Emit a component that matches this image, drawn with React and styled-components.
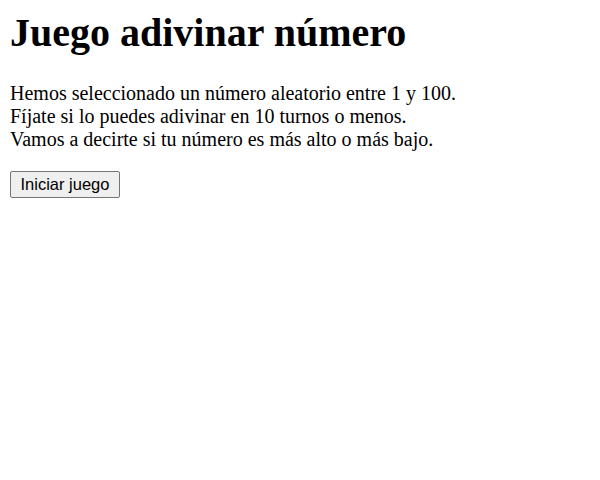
import React from "react";
import styled, { createGlobalStyle } from "styled-components";

const GlobalStyle = createGlobalStyle`
  html, body {
    background: #fff;
  }
  body {
    margin: 10px;
    font-family: "Liberation Serif", "Times New Roman", serif;
    font-size: 20px;
    color: #000;
  }
`;

const Title = styled.h1`
  font-size: 40px;
  font-weight: bold;
  margin: 0 0 26px;
  line-height: 46px;
`;

const Intro = styled.p`
  margin: 0 0 20px;
  line-height: 23px;
`;

const StartButton = styled.button`
  font-family: "Liberation Sans", Arial, sans-serif;
  font-size: 16.5px;
  padding: 2px 9.5px;
  height: 27px;
  background: #efefef;
  border: 1px solid #767676;
  border-radius: 2px;
  color: #000;
`;

export default function App() {
  return (
    <>
      <GlobalStyle />
      <Title>Juego adivinar número</Title>
      <Intro>
        Hemos seleccionado un número aleatorio entre 1 y 100.
        <br />
        Fíjate si lo puedes adivinar en 10 turnos o menos.
        <br />
        Vamos a decirte si tu número es más alto o más bajo.
      </Intro>
      <StartButton>Iniciar juego</StartButton>
    </>
  );
}
